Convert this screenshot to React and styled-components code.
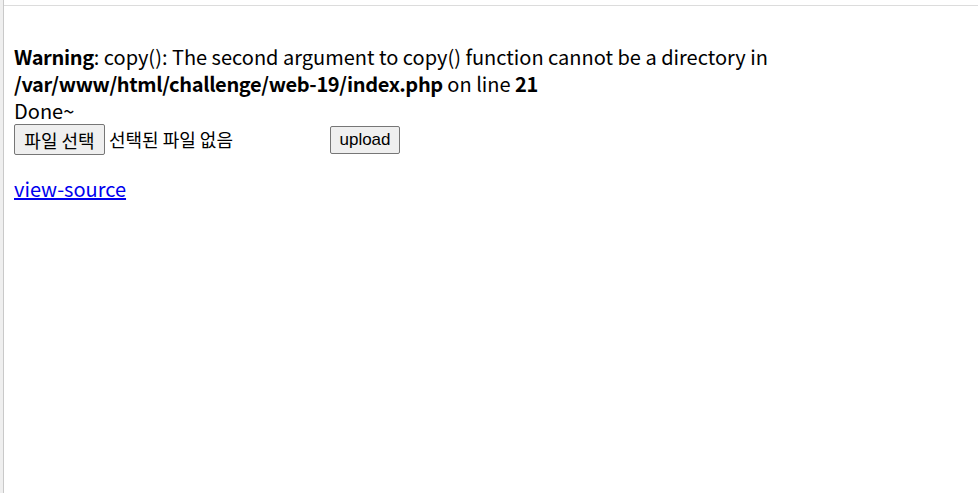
import React from "react";
import styled, { createGlobalStyle } from "styled-components";

const Global = createGlobalStyle`
  html, body { margin: 0; padding: 0; background: #fff; }
  body { font-family: "Noto Sans CJK KR", "Noto Sans", sans-serif; }
`;

const Frame = styled.div`
  display: flex;
  min-height: 493px;
  height: 100vh;
`;

const LeftStrip = styled.div`
  width: 3px;
  background: #efefef;
  border-right: 1px solid #c9c9c9;
  flex: none;
`;

const Main = styled.div`
  flex: 1;
  display: flex;
  flex-direction: column;
  padding-top: 5px;
  padding-right: 1px;
`;

const TopRule = styled.div`
  height: 1px;
  background: #dcdcdc;
`;

const Content = styled.div`
  padding: 10px 10px;
  font-size: 20px;
  line-height: 27px;
  color: #000;
`;

const Line = styled.div`
  min-height: 27px;
  white-space: nowrap;
`;

const Strong = styled.b`
  font-weight: 700;
  letter-spacing: -0.35px;
`;

const Form = styled.form`
  display: flex;
  align-items: center;
  height: 31px;
  margin: 0 0 20px;
`;

const NativeButton = styled.button`
  font-family: ${(p) => (p.$latin ? '"Liberation Sans", Arial, sans-serif' : '"Noto Sans CJK KR", sans-serif')};
  font-size: ${(p) => (p.$latin ? 17 : 18)}px;
  line-height: 1;
  height: ${(p) => p.$h}px;
  width: ${(p) => p.$w}px;
  padding: 0;
  background: #efefef;
  color: #000;
  border: 1px solid #767676;
  border-radius: 2px;
  margin: 0;
`;

const FileLabel = styled.span`
  width: 221px;
  margin-left: 4px;
  font-size: 18px;
  white-space: nowrap;
`;

const Link = styled.a`
  color: #0000ee;
  text-decoration: underline;
`;

export default function App() {
  return (
    <>
      <Global />
      <Frame>
        <LeftStrip />
        <Main>
          <TopRule />
          <Content>
            <Line />
            <Line>
              <Strong>Warning</Strong>: copy(): The second argument to copy() function cannot be a directory in
            </Line>
            <Line>
              <Strong>/var/www/html/challenge/web-19/index.php</Strong> on line <Strong>21</Strong>
            </Line>
            <Line>Done~</Line>
            <Form onSubmit={(e) => e.preventDefault()}>
              <NativeButton type="button" $h={31} $w={91}>파일 선택</NativeButton>
              <FileLabel>선택된 파일 없음</FileLabel>
              <NativeButton type="submit" $latin $h={28} $w={70}>upload</NativeButton>
            </Form>
            <Line>
              <Link href="#">view-source</Link>
            </Line>
          </Content>
        </Main>
      </Frame>
    </>
  );
}
